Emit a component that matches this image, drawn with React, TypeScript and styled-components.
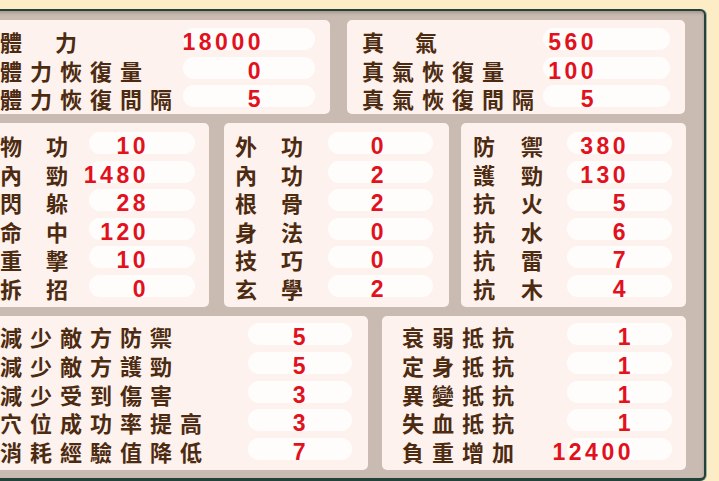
import React from "react";
import styled, { createGlobalStyle } from "styled-components";

const GlobalStyle = createGlobalStyle`
  html, body {
    margin: 0;
    padding: 0;
    width: 719px;
    height: 481px;
    overflow: hidden;
    background: #fcedc7;
  }
  #root { width: 719px; height: 481px; overflow: hidden; }
`;

const Frame = styled.div`
  box-sizing: border-box;
  width: 736px;
  height: 472px;
  margin: 9px 0 0 -30px;
  border: 2px solid #23433a;
  border-bottom-width: 3px;
  border-radius: 0 6px 6px 0;
  background: #c9bab2;
  box-shadow: inset 0 2px 3px rgba(70, 55, 45, 0.25), 1px 0 0 #9fb2a5;
  padding: 9px 18px 8px 16px;
  display: flex;
  flex-direction: column;
  gap: 9px;
`;

const Row = styled.div<{ $cols: string; $h: number }>`
  display: grid;
  grid-template-columns: ${(p) => p.$cols};
  column-gap: 0;
  height: ${(p) => p.$h}px;
`;

const Gap = styled.div``;

const Panel = styled.div<{
  $padL: number;
  $padT: number;
  $labelCol: number;
  $pillW: number;
  $rowGap: number;
}>`
  box-sizing: border-box;
  background: #fdf2ee;
  border-radius: 5px;
  padding: ${(p) => p.$padT}px 0 0 ${(p) => p.$padL}px;
  display: grid;
  grid-template-columns: ${(p) => p.$labelCol}px ${(p) => p.$pillW}px;
  grid-auto-rows: 22px;
  row-gap: ${(p) => p.$rowGap}px;
  align-content: start;
`;

const LabelBox = styled.div<{ $w?: number }>`
  box-sizing: border-box;
  height: 22px;
  padding-top: 2px;
  font-family: "Noto Sans CJK TC", "Noto Sans CJK SC", sans-serif;
  font-size: 22px;
  line-height: 22px;
  font-weight: 700;
  color: #4d2b10;
  white-space: nowrap;
  display: flex;
  justify-content: ${(p) => (p.$w ? "space-between" : "flex-start")};
  width: ${(p) => (p.$w ? `${p.$w}px` : "auto")};
  letter-spacing: ${(p) => (p.$w ? "0" : "8px")};
`;

const Pill = styled.div<{ $padR: number }>`
  box-sizing: border-box;
  height: 22px;
  border-radius: 11px;
  background: #fffdfc;
  display: flex;
  justify-content: flex-end;
  padding: 3px ${(p) => p.$padR}px 0 0;
`;

const Value = styled.span`
  font-family: "Liberation Sans", Arial, sans-serif;
  font-weight: 700;
  font-size: 23px;
  line-height: 22px;
  letter-spacing: 3.5px;
  color: #e1121d;
  white-space: nowrap;
`;

type Item = [string, string];

const Label = ({ text, w }: { text: string; w?: number }) =>
  w ? (
    <LabelBox $w={w}>
      {Array.from(text.replace(/ /g, "")).map((c, i) => (
        <span key={i}>{c}</span>
      ))}
    </LabelBox>
  ) : (
    <LabelBox>{text}</LabelBox>
  );

type PanelProps = {
  items: Item[];
  padL: number;
  padT: number;
  labelCol: number;
  pillW: number;
  rowGap: number;
  padR: number;
  spreadW?: number;
};

const StatPanel = ({ items, padL, padT, labelCol, pillW, rowGap, padR, spreadW }: PanelProps) => (
  <Panel $padL={padL} $padT={padT} $labelCol={labelCol} $pillW={pillW} $rowGap={rowGap}>
    {items.map(([label, value], i) => (
      <React.Fragment key={i}>
        <Label text={label} w={label.includes(" ") ? spreadW : undefined} />
        <Pill $padR={padR}>
          <Value>{value}</Value>
        </Pill>
      </React.Fragment>
    ))}
  </Panel>
);

const hp: Item[] = [
  ["體 力", "18000"],
  ["體力恢復量", "0"],
  ["體力恢復間隔", "5"],
];
const qi: Item[] = [
  ["真 氣", "560"],
  ["真氣恢復量", "100"],
  ["真氣恢復間隔", "5"],
];
const colA: Item[] = [
  ["物 功", "10"],
  ["內 勁", "1480"],
  ["閃 躲", "28"],
  ["命 中", "120"],
  ["重 擊", "10"],
  ["拆 招", "0"],
];
const colB: Item[] = [
  ["外 功", "0"],
  ["內 功", "2"],
  ["根 骨", "2"],
  ["身 法", "0"],
  ["技 巧", "0"],
  ["玄 學", "2"],
];
const colC: Item[] = [
  ["防 禦", "380"],
  ["護 勁", "130"],
  ["抗 火", "5"],
  ["抗 水", "6"],
  ["抗 雷", "7"],
  ["抗 木", "4"],
];
const colD: Item[] = [
  ["減少敵方防禦", "5"],
  ["減少敵方護勁", "5"],
  ["減少受到傷害", "3"],
  ["穴位成功率提高", "3"],
  ["消耗經驗值降低", "7"],
];
const colE: Item[] = [
  ["衰弱抵抗", "1"],
  ["定身抵抗", "1"],
  ["異變抵抗", "1"],
  ["失血抵抗", "1"],
  ["負重增加", "12400"],
];

export default function App() {
  return (
    <>
      <GlobalStyle />
      <Frame>
        <Row $cols="342px 17px 338px" $h={94}>
          <StatPanel items={hp} padL={12} padT={8} labelCol={183} pillW={132} rowGap={6.5} padR={51} spreadW={77} />
          <Gap />
          <StatPanel items={qi} padL={15} padT={8} labelCol={181} pillW={127} rowGap={6.5} padR={73} spreadW={75} />
        </Row>
        <Row $cols="221px 15px 225px 12px 225px" $h={184}>
          <StatPanel items={colA} padL={12} padT={9} labelCol={89} pillW={106} rowGap={6.6} padR={46} spreadW={68} />
          <Gap />
          <StatPanel items={colB} padL={11} padT={9} labelCol={93} pillW={105} rowGap={6.6} padR={46} spreadW={68} />
          <Gap />
          <StatPanel items={colC} padL={12} padT={9} labelCol={94} pillW={105} rowGap={6.6} padR={43} spreadW={70} />
        </Row>
        <Row $cols="380px 14px 304px" $h={154}>
          <StatPanel items={colD} padL={12} padT={7} labelCol={248} pillW={104} rowGap={6.75} padR={43} />
          <Gap />
          <StatPanel items={colE} padL={20} padT={7} labelCol={165} pillW={105} rowGap={6.75} padR={38} />
        </Row>
      </Frame>
    </>
  );
}
